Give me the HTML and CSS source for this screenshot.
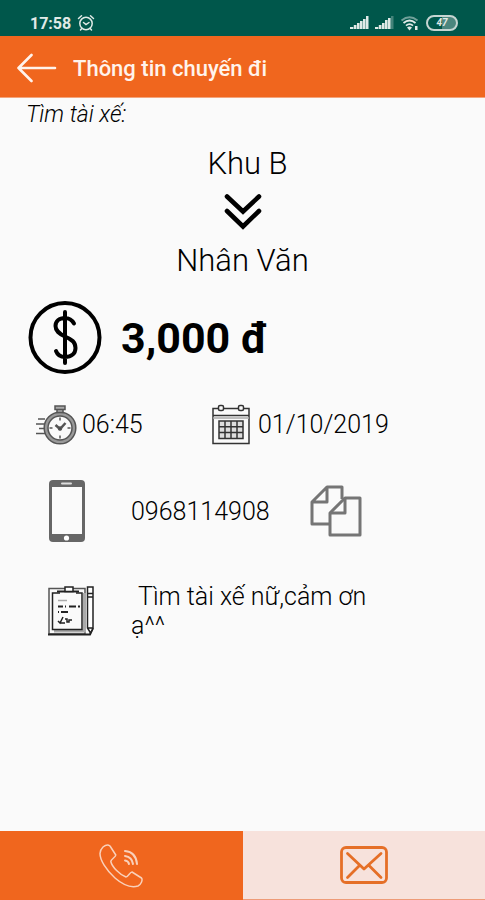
FILE: index.html
```html
<!DOCTYPE html>
<html lang="vi">
<head>
<meta charset="utf-8">
<meta name="viewport" content="width=device-width, initial-scale=1">
<title>Thông tin chuyến đi</title>
<link rel="stylesheet" href="styles.css">
</head>
<body>
<div class="status">
  <span class="status-time">17:58</span>
  <svg class="alarm" width="18" height="18" viewBox="0 0 18 18" fill="none" stroke="currentColor" stroke-width="1.5" stroke-linecap="round" aria-hidden="true">
    <circle cx="9" cy="9.5" r="6.2"/><path d="M6.5 8.5 9 10.5 12 8.5M1.5 4.5 4.5 1.8M16.5 4.5 13.5 1.8M4.8 14.5 3.5 16M13.2 14.5 14.5 16"/>
  </svg>
  <div class="status-icons">
    <svg width="19" height="14" viewBox="0 0 19 14" fill="currentColor" aria-hidden="true">
      <path d="M0 11h3.300v2H0zM3.800 9h2.700v4H3.800zM7 7h2.600v6H7zM10 5h2.600v8H10zM13 3h2.600v10H13zM16 0h2.500v13H16z"/>
    </svg>
    <svg width="19" height="14" viewBox="0 0 19 14" fill="currentColor" aria-hidden="true">
      <path d="M0 11h3.300v2H0zM3.800 9h2.700v4H3.800zM7 7h2.600v6H7zM10 4h2.600v9H10zM13 2h2.600v11H13z"/><path opacity=".3" d="M16 0h2.500v13H16z"/>
    </svg>
    <svg width="20" height="16" viewBox="0 0 20 16" fill="none" stroke="currentColor" stroke-width="1.8" aria-hidden="true">
      <path opacity=".5" d="M1.5 5.5Q9.500-1 17.500 5.500"/><path d="M3.500 8Q9.500 3 15.500 8M6 10.700Q9.500 7.500 13 10.700"/><path fill="currentColor" stroke="none" d="M7 12.500Q9.500 10.500 12 12.500L9.500 15.500zM15 11h2.500v4H15z"/>
    </svg>
    <span class="battery">47</span>
  </div>
</div>
<header class="appbar">
  <button class="back" type="button" aria-label="Quay lại">
    <svg width="40" height="30" viewBox="0 0 40 30" fill="none" stroke="currentColor" stroke-width="2.600" stroke-linecap="round" stroke-linejoin="round" aria-hidden="true"><path d="M38 15H1.500M14.500 2 1.500 15 14.500 28"/></svg>
  </button>
  <h1 class="title">Thông tin chuyến đi</h1>
</header>
<main class="trip">
  <p class="kind">Tìm tài xế:</p>
  <div class="route">
    <p class="origin">Khu B</p>
    <svg width="38" height="37" viewBox="0 0 38 37" fill="none" stroke="currentColor" stroke-width="4.600" stroke-linecap="round" stroke-linejoin="miter" aria-hidden="true"><path d="M3 2.500 19 17.500 35 2.500M3 17 19 32.500 35 17"/></svg>
    <p>Nhân Văn</p>
  </div>
  <div class="price">
    <svg width="74" height="74" viewBox="0 0 74 74" fill="none" stroke="currentColor" stroke-width="4" stroke-linecap="round" aria-hidden="true">
      <circle cx="37" cy="36.500" r="34.500"/>
      <path d="M37 11V62M46 22.500C44 19 41 17 37 17C31 17 27.500 20.500 27.500 25C27.500 30 31 32.500 37 35.500C43.500 38.200 47.500 41 47.500 47C47.500 52.500 43.500 56 37 56C32.500 56 29.500 54 28 50"/>
    </svg>
    <span>3,000 đ</span>
  </div>
  <div class="when">
    <div class="when-item">
      <svg width="42" height="40" viewBox="0 0 42 40" fill="none" stroke="#555" stroke-width="1.500" aria-hidden="true">
        <circle cx="24" cy="23" r="14" stroke="#999" stroke-width="4"/><circle cx="24" cy="23" r="15.800"/><circle cx="24" cy="23" r="12"/>
        <path fill="#aaa" d="M19 1h10v3.500H19zM21 4.500h6v3h-6z"/>
        <path d="M24 12.500v3M24 30.500v3M13.500 23h3M31.500 23h3M2 14h7M0 19h8M3 23.500h5M0 28.500h9"/>
        <path stroke-width="2.500" d="M19.500 20 24 24 29.500 18"/><circle cx="24" cy="23.500" r="1.500" fill="#444"/>
      </svg>
      <time>06:45</time>
    </div>
    <div class="when-item">
      <svg width="38" height="41" viewBox="0 0 38 41" fill="none" stroke="#333" stroke-width="1.500" aria-hidden="true">
        <path d="M1 4.500H37V39.500H1zM1 11.500H37"/><path d="M1 14H37" stroke="#aaa"/>
        <g fill="#fafafa"><rect x="6.500" y="1.500" width="5" height="5" rx="1.500"/><rect x="26.500" y="1.500" width="5" height="5" rx="1.500"/></g>
        <path fill="#ddd" d="M7 17H31V34.500H7z"/><path d="M13 17v17.500M19 17v17.500M25 17v17.500M7 22.800H31M7 28.600H31"/>
      </svg>
      <time datetime="2019-10-01">01/10/2019</time>
    </div>
  </div>
  <div class="detail phone">
    <svg class="detail-icon" width="38" height="62" viewBox="0 0 38 62" aria-hidden="true">
      <rect x="1" y="0" width="36" height="62" rx="4" fill="#666"/><path fill="#fafafa" d="M4 7H34V54H4z"/><rect x="13" y="2.500" width="11" height="2" rx="1" fill="#ddd"/><circle cx="18.500" cy="58" r="2.600" fill="#fff"/>
    </svg>
    <span class="number">0968114908</span>
    <button class="copy" type="button" aria-label="Sao chép số điện thoại">
      <svg width="52" height="52" viewBox="0 0 52 52" fill="none" stroke="#757575" stroke-width="3" stroke-linejoin="round" aria-hidden="true">
        <path d="M20 39H2V17L17 2H32V14M17 2V17H2"/><path fill="#fafafa" d="M35 13H50V50H20V28z"/><path d="M35 13V28H20"/>
      </svg>
    </button>
  </div>
  <div class="detail note">
    <svg class="detail-icon" width="46" height="50" viewBox="0 0 46 50" fill="none" stroke="#222" stroke-width="1.500" aria-hidden="true">
      <path d="M1 2.500H37V48H1z" stroke="#555"/><path stroke-width="2" d="M0 48.500H42L45 42"/>
      <path stroke="#aaa" stroke-width="3" d="M36.500 7V45H6"/><path d="M12 7H4.500V43.500H34V7H28"/>
      <path d="M9 5.500H31" stroke-width="2"/><path fill="#fff" d="M17 1H25V5.500H17z"/>
      <path stroke="#aaa" d="M10 14.500h9"/><path stroke-width="1.800" d="M10 20.500h5M17 20.500h1M21 20.500h7M30 20.500h2M10 26h1M13 26h7"/>
      <path d="M10 35 12 37 15 31M12 37h5M17 33h2v3h2v-2h3"/>
      <path fill="#fff" d="M39.500 1H45V42L42.500 47 39.500 42zM39.500 7.500H45M39.500 11H45M39.500 42H45"/>
    </svg>
    <p class="note-text">Tìm tài xế nữ,cảm ơn ạ^^</p>
  </div>
</main>
<nav class="actions">
  <button class="action call" type="button" aria-label="Gọi điện">
    <svg width="44" height="44" viewBox="0 0 44 44" fill="none" stroke="currentColor" stroke-width="1.500" stroke-linejoin="round" stroke-linecap="round" aria-hidden="true">
      <path d="M4 3C6.500 1 9.500 .8 11 2L16.800 11C17 13 12 15 11.800 17.500C13 23 21 31 27 33C29 33 31 28 33 28L42.500 34C44 36 42 40.500 39 42C32 44 24 41 16 34C7 26 1 16 1 9.500C1 7 2 5 4 3Z"/>
      <path stroke-width="2" d="M26 7Q37 8 38 20M26 12Q33 13 34 20M26 16.500Q29.500 17 30 20"/>
    </svg>
  </button>
  <button class="action message" type="button" aria-label="Nhắn tin">
    <svg width="48" height="38" viewBox="0 0 48 38" fill="none" stroke="currentColor" stroke-width="2.800" stroke-linecap="round" stroke-linejoin="round" aria-hidden="true">
      <rect x="1.500" y="1.500" width="45" height="35" rx="4.500"/><path d="M7.500 7.500 24 23 41 7.500M7.500 31.500 19.500 19.500M41 31.500 29 19.500"/>
    </svg>
  </button>
</nav>
</body>
</html>
```
FILE: styles.css
```css
* { box-sizing: border-box; }

body {
  margin: 0;
  min-height: 100vh;
  display: flex;
  flex-direction: column;
  background: #fafafa;
  color: #000;
  font-family: Roboto, "Noto Sans", sans-serif;
}

p, h1 { margin: 0; }

svg { display: block; flex: none; }

button {
  margin: 0;
  padding: 0;
  border: 0;
  background: none;
  color: inherit;
  cursor: pointer;
}

.status {
  display: flex;
  align-items: center;
  gap: 6px;
  height: 36px;
  padding: 10px 27px 0 30px;
  background: #00574b;
  color: #e0eae7;
}

.status-time {
  font-size: 16px;
  font-weight: 700;
}

.status-icons {
  display: flex;
  align-items: center;
  gap: 6px;
  margin-left: auto;
}

.battery {
  width: 32px;
  height: 16px;
  border: 2px solid #c5d5d2;
  border-radius: 8px;
  background: linear-gradient(90deg, #00574b 50%, #4b867e 50%);
  font-size: 10px;
  font-style: italic;
  font-weight: 700;
  line-height: 12px;
  text-align: center;
}

.appbar {
  display: flex;
  align-items: center;
  gap: 16px;
  height: 62px;
  padding: 3px 17px 0;
  border-bottom: 1px solid #f3a47c;
  background: #f0661e;
  color: #fff3ec;
}

.title {
  font-size: 22px;
  font-weight: 500;
}

.trip {
  flex: 1;
  padding: 4px 26px 24px;
}

.kind {
  font-size: 23px;
  font-style: italic;
  font-weight: 300;
  line-height: 26px;
}

.route {
  display: flex;
  flex-direction: column;
  align-items: center;
  gap: 12px;
  margin-top: 18px;
  font-size: 31px;
  font-weight: 300;
  line-height: 36px;
}

.origin { padding-left: 10px; }

.price {
  display: flex;
  align-items: center;
  gap: 19px;
  margin-top: 22px;
  padding-left: 2px;
  font-size: 43px;
  font-weight: 700;
}

.when {
  display: grid;
  grid-template-columns: 176px 1fr;
  margin-top: 29px;
  padding-left: 10px;
  font-size: 25px;
  font-weight: 300;
}

.when-item {
  display: flex;
  align-items: center;
  gap: 8px;
}

.when-item:first-child { gap: 4px; }

.detail {
  display: grid;
  grid-template-columns: 105px 1fr;
  align-items: center;
  font-size: 25px;
  font-weight: 300;
}

.detail-icon { margin-left: 22px; }

.phone {
  grid-template-columns: 105px auto 1fr;
  margin-top: 35px;
}

.copy {
  justify-self: start;
  margin-left: 40px;
}

.note {
  margin-top: 40px;
  line-height: 29px;
}

.note-text {
  max-width: 250px;
  text-indent: 7px;
}

.actions {
  display: grid;
  grid-template-columns: 1fr 1fr;
  height: 69px;
}

.action {
  display: grid;
  place-items: center;
}

.call {
  background: #f0661e;
  color: #f9d0ba;
}

.message {
  border-bottom: 1px solid #ee9b78;
  background: #f7e2dc;
  color: #e56f27;
}
```
